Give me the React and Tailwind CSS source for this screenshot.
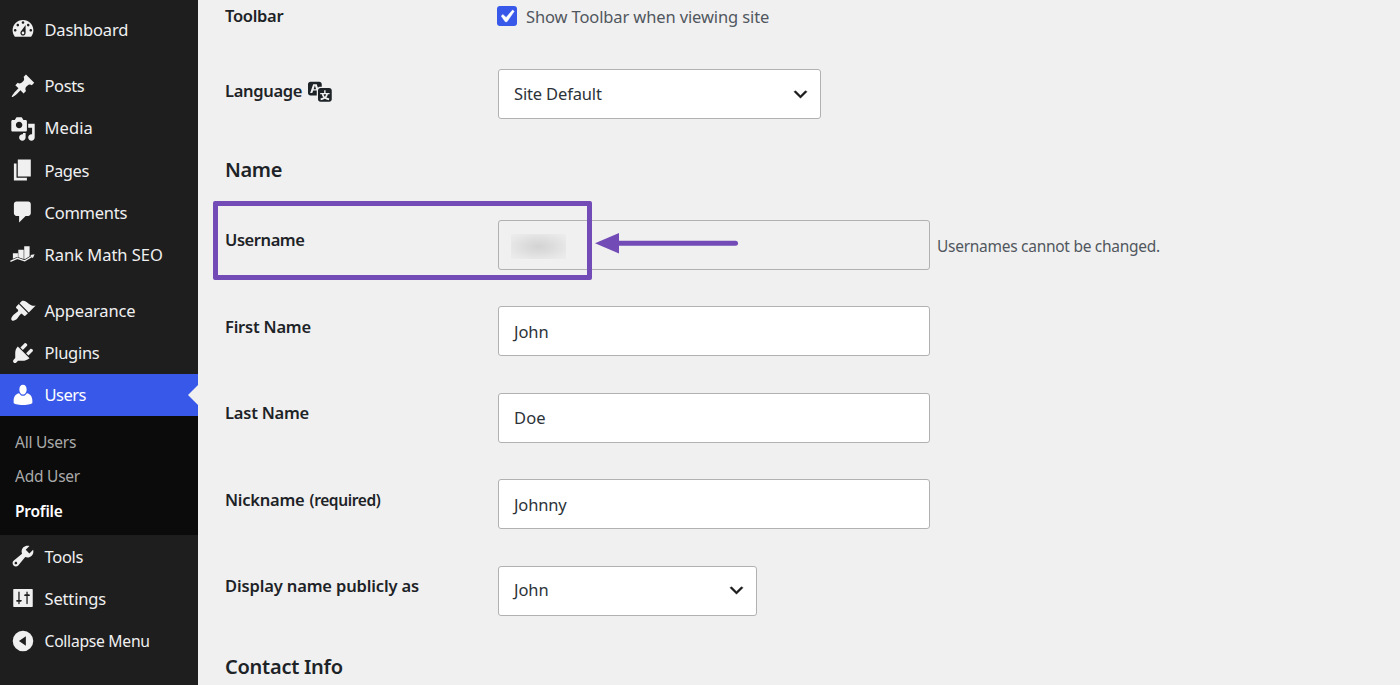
const GLYPHS = {
  dashboard: "M3.76 16h12.48c1.1-1.37 1.76-3.11 1.76-5 0-4.42-3.58-8-8-8s-8 3.58-8 8c0 1.89.66 3.63 1.76 5zM10 4c.55 0 1 .45 1 1s-.45 1-1 1-1-.45-1-1 .45-1 1-1zM6 6c.55 0 1 .45 1 1s-.45 1-1 1-1-.45-1-1 .45-1 1-1zm8 0c.55 0 1 .45 1 1s-.45 1-1 1-1-.45-1-1 .45-1 1-1zm-5.37 5.55L12 7v6c0 1.1-.9 2-2 2s-2-.9-2-2c0-.57.24-1.08.63-1.45zM4 10c.55 0 1 .45 1 1s-.45 1-1 1-1-.45-1-1 .45-1 1-1zm12 0c.55 0 1 .45 1 1s-.45 1-1 1-1-.45-1-1 .45-1 1-1zm-5 3c0-.55-.45-1-1-1s-1 .45-1 1 .45 1 1 1 1-.45 1-1z",
  post: "M10.44 3.02l1.82-1.82 6.36 6.35-1.83 1.82c-1.05-.68-2.48-.57-3.41.36l-.75.75c-.92.93-1.04 2.35-.35 3.41l-1.83 1.82-2.41-2.41-2.8 2.79c-.42.42-3.38 2.71-3.8 2.29s1.86-3.39 2.28-3.81l2.79-2.79L4.1 9.36l1.83-1.82c1.05.69 2.48.57 3.4-.36l.75-.75c.93-.92 1.05-2.35.36-3.41z",
  media: "M13 11V4c0-.55-.45-1-1-1h-1.67L9 1H5L3.67 3H2c-.55 0-1 .45-1 1v7c0 .55.45 1 1 1h10c.55 0 1-.45 1-1zM7 4.5c1.38 0 2.5 1.12 2.5 2.5S8.38 9.5 7 9.5 4.5 8.38 4.5 7 5.62 4.5 7 4.5zM14 6h5v10.5c0 1.38-1.12 2.5-2.5 2.5S14 17.88 14 16.5s1.12-2.5 2.5-2.5c.17 0 .34.02.5.05V9h-3V6zm-4 8.05V13h2v3.5c0 1.38-1.12 2.5-2.5 2.5S7 17.88 7 16.5 8.12 14 9.5 14c.17 0 .34.02.5.05z",
  page: "M6 15V2h10v13H6zm-1 1h8v2H3V5h2v11z",
  comments: "M5 2h9c1.1 0 2 .9 2 2v7c0 1.1-.9 2-2 2h-2l-5 5v-5H5c-1.1 0-2-.9-2-2V4c0-1.1.9-2 2-2z",
  appearance: "M14.48 11.06L7.41 3.99l1.5-1.5c.5-.56 2.3-.47 3.51.32 1.21.8 1.43 1.28 2.91 2.1 1.18.64 2.45 1.26 4.45.85zm-.71.71L6.7 4.7 4.93 6.47c-.39.39-.39 1.02 0 1.41l1.06 1.06c.39.39.39 1.03 0 1.42-.6.6-1.43 1.11-2.21 1.69-.35.26-.7.53-1.01.84C1.43 14.23.4 16.08 1.4 17.07c.99 1 2.84-.03 4.18-1.36.31-.31.58-.66.85-1.02.57-.78 1.08-1.61 1.69-2.21.39-.39 1.02-.39 1.41 0l1.06 1.06c.39.39 1.02.39 1.41 0z",
  plugins: "M13.11 4.36L9.87 7.6 8 5.73l3.24-3.24c.35-.34 1.05-.2 1.56.32.52.51.66 1.21.31 1.55zm-8 1.77l.91-1.12 9.01 9.01-1.19.84c-.71.71-2.63 1.16-3.82 1.16H6.14L4.9 17.26c-.59.59-1.54.59-2.12 0-.59-.58-.59-1.53 0-2.12l1.24-1.24v-3.88c0-1.13.4-3.19 1.09-3.89zm7.26 3.97l3.24-3.24c.34-.35 1.04-.21 1.55.31.52.51.66 1.21.31 1.55l-3.24 3.25z",
  users: "M10 2.2c1.7 0 2.8 1.5 2.8 3.5S11.6 9.6 10 9.6 7.2 7.7 7.2 5.7 8.3 2.2 10 2.2zM2.8 14.3c0-3 1.5-5.2 4.2-5.7.8 1.3 1.8 2 3 2s2.200-.7 3-2c2.700.5 4.200 2.700 4.200 5.700v1.700c0 .8-3.100 1.700-7.200 1.700s-7.200-.9-7.200-1.700z",
  tools: "M16.68 9.77c-1.34 1.34-3.3 1.67-4.95.99l-5.41 6.52c-.99.99-2.59.99-3.58 0s-.99-2.59 0-3.57l6.52-5.42c-.68-1.65-.35-3.61.99-4.95 1.28-1.28 3.12-1.62 4.72-1.06l-2.89 2.89 2.82 2.82 2.86-2.87c.53 1.58.18 3.39-1.08 4.65zM3.81 16.21c.4.39 1.04.39 1.43 0 .4-.4.4-1.04 0-1.43-.39-.4-1.03-.4-1.43 0-.39.39-.39 1.03 0 1.43z",
  settings: "M17.5 16.4V3.6c0-.3-.2-.5-.5-.5H3c-.3 0-.5.2-.5.5v12.800c0 .3.2.5.5.5h14c.3 0 .5-.2.5-.5zM7.400 11.500h.9c.5 0 .8.3.8.7s-.3.7-.8.7h-.9v1.400c0 .3-.2.5-.5.5s-.5-.2-.5-.5v-1.400h-.9c-.5 0-.8-.3-.8-.7s.3-.7.8-.7h.9V5.500c0-.3.2-.5.5-.5s.5.2.5.5v6zM12.600 8.500h-.9c-.5 0-.8-.3-.8-.7s.3-.7.8-.7h.9V5.500c0-.3.2-.5.5-.5s.5.2.5.5v1.600h.9c.5 0 .8.3.8.7s-.3.7-.8.7h-.9v5.800c0 .3-.2.5-.5.5s-.5-.2-.5-.5z",
  collapse: "M10 2.1a7.9 7.9 0 100 15.8 7.9 7.9 0 000-15.8zM12.2 6.400v7.200L6.900 10z",
  translation: "M11 7H9.49c-.63 0-1.09.3-1.59.7L7 5H4.13l-2.39 7h1.69l.74-2H7v4H2c-1.1 0-2-.9-2-2V5c0-1.1.9-2 2-2h7c1.1 0 2 .9 2 2v2zM6.51 9H4.49l1-2.93zM10 8h7c1.1 0 2 .9 2 2v7c0 1.1-.9 2-2 2h-7c-1.1 0-2-.9-2-2v-7c0-1.1.9-2 2-2zm7.25 5v-1.08h-3.17V9.75h-1.16v2.17H9.75V13h1.28c.11.85.56 1.85 1.28 2.62-.87.36-1.89.62-2.31.62-.01.02.22.97.2 1.46.84 0 2.21-.5 3.28-1.15 1.09.65 2.48 1.15 3.34 1.15-.02-.49.2-1.44.2-1.46-.43 0-1.49-.27-2.38-.63.7-.77 1.14-1.77 1.25-2.61h1.36zm-3.81 1.93c-.5-.46-.85-1.13-1.01-1.93h2.09c-.17.8-.51 1.47-1 1.93l-.04.03s-.03-.02-.04-.03z",
  check: "M14.83 4.89l1.34.94-5.81 8.38H9.02L5.78 9.67l1.34-1.25 2.57 2.4z",
  chevron: "M5 6l5 5 5-5 2 1-7 7-7-7 2-1z",
};

function Glyph({ name, className }) {
  return (
    <svg viewBox="0 0 20 20" fill="currentColor" fillRule="evenodd" className={className} aria-hidden="true">
      <path d={GLYPHS[name]} />
    </svg>
  );
}

function RankMathIcon() {
  return (
    <svg viewBox="0 0 26 26" className="size-[26px] shrink-0" aria-hidden="true">
      <path fill="currentColor" d="M2.900 11.300h5v4.100l-.8-.3-4.200 1.700zM8.300 7.700h5.400v9.300l-5.400-1.800zM14.200 4.300h5.400v10l-4.800 2.900-.6-.1z" />
      <path fill="none" stroke="currentColor" strokeWidth="1.3" d="M.4 19.300l6.900-3 7.400 2.600 7.300-4.500" />
      <path fill="currentColor" d="M20.300 13l4.300-.7-1.800 4z" />
    </svg>
  );
}

function MenuItem({ icon, label, iconClass = "", textClass = "text-[16.5px]", current = false }) {
  return (
    <a className={`relative flex h-[42.2px] items-center ${current ? "bg-[#3858e9] text-white" : "text-[#f0f0f1]"}`}>
      <span className={`flex w-[44.5px] shrink-0 items-center justify-center pl-[1px] ${iconClass}`}>
        {icon === "rankmath" ? <RankMathIcon /> : <Glyph name={icon} className="size-[26px] shrink-0" />}
      </span>
      <span className={`whitespace-nowrap leading-6 ${textClass}`}>{label}</span>
      {current && (
        <span className="absolute right-0 top-1/2 size-0 -translate-y-1/2 border-y-[10px] border-r-[10px] border-y-transparent border-r-[#f0f0f0]" />
      )}
    </a>
  );
}

function Sidebar() {
  return (
    <nav className="flex w-[198px] shrink-0 flex-col bg-[#1e1e1e] pt-[9.3px]">
      <MenuItem icon="dashboard" label="Dashboard" iconClass="pb-[2px]" textClass="text-[16.5px] tracking-[-0.2px]" />
      <div className="h-[13.7px]" />
      <MenuItem icon="post" label="Posts" textClass="text-[16.5px] tracking-[-0.4px]" />
      <MenuItem icon="media" label="Media" iconClass="pt-[1px]" textClass="text-[16.5px] tracking-[0.1px]" />
      <MenuItem icon="page" label="Pages" iconClass="pb-[1px]" textClass="text-[16.5px] tracking-[-0.45px]" />
      <MenuItem icon="comments" label="Comments" iconClass="pb-[1px]" textClass="text-[16.5px] tracking-[-0.25px]" />
      <MenuItem icon="rankmath" label="Rank Math SEO" textClass="text-[16.5px] tracking-[-0.02px]" />
      <div className="h-[13.5px]" />
      <MenuItem icon="appearance" label="Appearance" textClass="text-[16.5px] tracking-[-0.18px]" />
      <MenuItem icon="plugins" label="Plugins" textClass="text-[16.5px] tracking-[-0.28px]" />
      <MenuItem icon="users" label="Users" textClass="text-[16.5px] tracking-[-0.5px]" current />
      <div className="flex h-[119px] flex-col bg-[#0b0b0b] pl-[15px] pt-[8.700px] text-[15.5px] text-[#a9a9aa]">
        <a className="flex h-[34.7px] items-center tracking-[-0.23px]">All Users</a>
        <a className="flex h-[34.7px] items-center tracking-[-0.24px]">Add User</a>
        <a className="flex h-[34.7px] items-center font-semibold tracking-[-0.22px] text-white">Profile</a>
      </div>
      <MenuItem icon="tools" label="Tools" textClass="pt-[2px] text-[16.5px] tracking-[-0.3px]" />
      <MenuItem icon="settings" label="Settings" textClass="pt-[2px] text-[16.5px] tracking-[-0.15px]" />
      <MenuItem icon="collapse" label="Collapse Menu" textClass="text-[15.7px] tracking-[-0.28px]" />
    </nav>
  );
}

function Row({ label, className = "h-[86.45px]", children }) {
  return (
    <div className={`grid grid-cols-[273px_1fr] items-start ${className}`}>
      <div className="flex items-baseline whitespace-nowrap pt-[8.4px] text-[16.5px] font-[570] leading-6">{label}</div>
      {children}
    </div>
  );
}

function Field({ className = "", children }) {
  return (
    <div className={`flex h-[50px] w-[432px] shrink-0 items-center rounded-[3px] border border-[#b0b1b3] pl-[15px] pt-[2px] text-[16.5px] text-[#2c3338] ${className}`}>
      {children}
    </div>
  );
}

function Select({ width, className = "", children }) {
  return (
    <div className={`flex h-[50px] items-center justify-between rounded-[3px] border border-[#b0b1b3] bg-white pl-[15px] pr-[10px] text-[16.5px] text-[#2c3338] ${width}`}>
      <span className={className}>{children}</span>
      <Glyph name="chevron" className="size-[19px] stroke-current stroke-[0.4] text-[#1e1e1e]" />
    </div>
  );
}

export default function App() {
  return (
    <div className="flex h-[685px] w-[1400px] overflow-hidden bg-[#f0f0f0] font-['Noto_Sans',sans-serif] text-[#1d2327]">
      <Sidebar />
      <main className="flex flex-1 flex-col pl-[27px]">
        <div className="grid h-[69px] shrink-0 grid-cols-[272px_1fr] items-start">
          <div className="pt-[4px] text-[16.5px] font-[570] leading-6 tracking-[-0.3px]">Toolbar</div>
          <label className="flex items-start gap-[9px] text-[16.5px] leading-6 tracking-[-0.12px] text-[#50575e]">
            <span className="mt-[6px] flex size-[20px] items-center justify-center rounded-[3px] bg-[#3858e9] text-white">
              <Glyph name="check" className="-ml-[2px] size-[25px] shrink-0 stroke-current stroke-[0.4]" />
            </span>
            <span className="pt-[5px]">Show Toolbar when viewing site</span>
          </label>
        </div>
        <Row
          className="h-[86px]"
          label={
            <span className="flex items-center pt-[0.7px]">
              <span className="tracking-[-0.32px]">Language</span>
              <Glyph name="translation" className="ml-[6px] size-[25px]" />
            </span>
          }
        >
          <Select width="w-[323px]" className="tracking-[-0.15px]">Site Default</Select>
        </Row>
        <h2 className="h-[64.8px] text-[20px] font-[570] leading-[30px] tracking-[-0.35px]">Name</h2>
        <div className="relative">
          <Row label={<span className="tracking-[-0.43px]">Username</span>}>
            <div className="flex items-center gap-[7px]">
              <Field>
                <span className="-ml-[3.500px] mt-[1px] h-[25px] w-[55px] bg-[radial-gradient(ellipse_at_center,#d3d3d3_0%,#dcdcdc_35%,#e8e8e8_75%,#ededed_100%)]" />
              </Field>
              <span className="pt-[4px] text-[15.5px] tracking-[-0.28px] text-[#50575e]">Usernames cannot be changed.</span>
            </div>
          </Row>
          <div className="absolute -left-[12px] -top-[19px] h-[79px] w-[379px] rounded-[2px] border-[5px] border-[#734bb7]" />
          <svg viewBox="0 0 144 22" className="absolute left-[370px] top-[12px] h-[22px] w-[144px]" aria-hidden="true">
            <path d="M22 11.2h118.5" stroke="#734bb7" strokeWidth="5" strokeLinecap="round" />
            <path d="M0 11.2L24 1v20.4z" fill="#734bb7" />
          </svg>
        </div>
        <Row label={<span className="tracking-[-0.22px]">First Name</span>}>
          <Field className="bg-white tracking-[-0.1px]">John</Field>
        </Row>
        <Row label={<span className="tracking-[-0.22px]">Last Name</span>}>
          <Field className="bg-white tracking-[0.1px]">Doe</Field>
        </Row>
        <Row
          label={
            <>
              <span className="tracking-[-0.24px]">Nickname</span>
              <span className="ml-[5px] text-[15.5px] tracking-[-0.38px]">(required)</span>
            </>
          }
        >
          <Field className="bg-white tracking-[-0.15px]">Johnny</Field>
        </Row>
        <Row label={<span className="tracking-[-0.14px]">Display name publicly as</span>}>
          <Select width="w-[259px]" className="tracking-[-0.1px]">John</Select>
        </Row>
        <h2 className="text-[20px] font-[570] leading-[29px] tracking-[-0.26px]">Contact Info</h2>
      </main>
    </div>
  );
}
